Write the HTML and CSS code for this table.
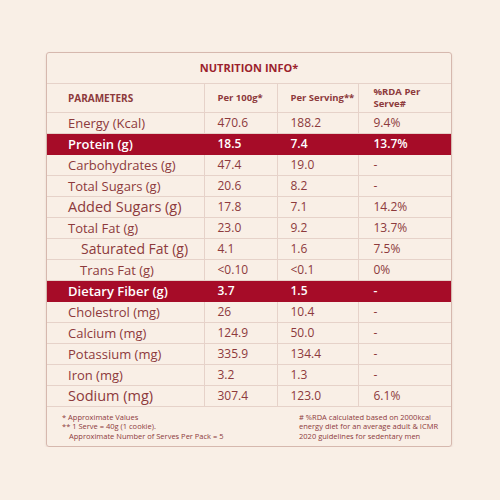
FILE: index.html
```html
<!DOCTYPE html>
<html lang="en">
<head>
    <meta charset="UTF-8">
    <title>Nutrition Info</title>
    <link rel="stylesheet" href="styles.css">
</head>
<body>
    <div class="panel">
        <table class="nutrition">
            <colgroup>
                <col class="c-param">
                <col class="c-100">
                <col class="c-serve">
                <col class="c-rda">
            </colgroup>
            <tr class="title-row">
                <th colspan="4">NUTRITION INFO*</th>
            </tr>
            <tr class="head-row">
                <th>PARAMETERS</th>
                <th>Per 100g*</th>
                <th>Per Serving**</th>
                <th>%RDA Per<br>Serve#</th>
            </tr>
            <tr><td>Energy (Kcal)</td><td>470.6</td><td>188.2</td><td>9.4%</td></tr>
            <tr class="hl"><td>Protein (g)</td><td>18.5</td><td>7.4</td><td>13.7%</td></tr>
            <tr><td>Carbohydrates (g)</td><td>47.4</td><td>19.0</td><td>-</td></tr>
            <tr><td>Total Sugars (g)</td><td>20.6</td><td>8.2</td><td>-</td></tr>
            <tr><td class="big">Added Sugars (g)</td><td>17.8</td><td>7.1</td><td>14.2%</td></tr>
            <tr><td>Total Fat (g)</td><td>23.0</td><td>9.2</td><td>13.7%</td></tr>
            <tr><td class="big sub">Saturated Fat (g)</td><td>4.1</td><td>1.6</td><td>7.5%</td></tr>
            <tr><td class="sub">Trans Fat (g)</td><td>&lt;0.10</td><td>&lt;0.1</td><td>0%</td></tr>
            <tr class="hl"><td>Dietary Fiber (g)</td><td>3.7</td><td>1.5</td><td>-</td></tr>
            <tr><td>Cholestrol (mg)</td><td>26</td><td>10.4</td><td>-</td></tr>
            <tr><td>Calcium (mg)</td><td>124.9</td><td>50.0</td><td>-</td></tr>
            <tr><td>Potassium (mg)</td><td>335.9</td><td>134.4</td><td>-</td></tr>
            <tr><td>Iron (mg)</td><td>3.2</td><td>1.3</td><td>-</td></tr>
            <tr><td class="big">Sodium (mg)</td><td>307.4</td><td>123.0</td><td>6.1%</td></tr>
            <tr class="foot-row">
                <td colspan="4">
                    <div class="notes">
                        <div class="notes-left">
                            * Approximate Values<br>
                            ** 1 Serve = 40g (1 cookie).<br>
                            <span class="indent">Approximate Number of Serves Per Pack = 5</span>
                        </div>
                        <div class="notes-right">
                            # %RDA calculated based on 2000kcal energy diet for an average adult &amp; ICMR 2020 guidelines for sedentary men
                        </div>
                    </div>
                </td>
            </tr>
        </table>
    </div>
</body>
</html>
```

FILE: styles.css
```css
:root {
    --bg: #f9efe6;
    --text: #8d3a3c;
    --title: #9c1f2d;
    --line: #e6d2c9;
    --frame: #d6b8ae;
    --accent: #a60c28;
}

* {
    box-sizing: border-box;
    margin: 0;
    padding: 0;
}

body {
    background-color: var(--bg);
    font-family: "Open Sans", "Noto Sans", Arial, sans-serif;
    color: var(--text);
    padding: 52px 48px 0 46px;
}

.panel {
    width: 406px;
    border: 1px solid var(--frame);
    border-radius: 3px;
    box-shadow: 0 1px 2px rgba(120, 60, 50, 0.15);
    overflow: hidden;
}

.nutrition {
    width: 100%;
    border-collapse: collapse;
    table-layout: fixed;
}

.c-param { width: 157px; }
.c-100 { width: 73px; }
.c-serve { width: 81px; }
.c-rda { width: 93px; }

.nutrition td,
.nutrition th {
    border: 1px solid var(--line);
    text-align: left;
    vertical-align: middle;
    padding: 0 0 0 13px;
    height: 21px;
    font-size: 12px;
    font-weight: 400;
    white-space: nowrap;
}

.nutrition tr > :first-child {
    border-left: none;
    padding-left: 21px;
}

.nutrition tr > :last-child {
    border-right: none;
    padding-left: 15px;
}

.title-row th {
    height: 30px;
    border-top: none;
    text-align: center;
    font-size: 11px;
    font-weight: 700;
    color: var(--title);
}

.nutrition .title-row th {
    padding-left: 0;
}

.head-row th {
    height: 29px;
    font-size: 9.5px;
    font-weight: 700;
    line-height: 12px;
    color: var(--text);
}

.nutrition .head-row th:first-child {
    font-size: 10px;
}

.nutrition td:first-child {
    font-size: 13px;
}

.nutrition td.big {
    font-size: 14.5px;
}

.nutrition tr > td.sub {
    padding-left: 33px;
}

.nutrition tr > td.big.sub {
    padding-left: 34px;
    font-size: 14px;
}

.hl td {
    background-color: var(--accent);
    border-color: var(--accent);
    color: #fff;
    font-weight: 600;
}

.nutrition .hl td:first-child {
    font-weight: 600;
}

.foot-row td {
    height: 40px;
    border-bottom: none;
    vertical-align: top;
}

.notes {
    display: flex;
    justify-content: space-between;
    padding: 6px 0 0;
    font-size: 7.5px;
    line-height: 9.5px;
    white-space: normal;
}

.indent {
    padding-left: 7px;
}

.notes-right {
    width: 148px;
    margin-right: 4px;
}
```
